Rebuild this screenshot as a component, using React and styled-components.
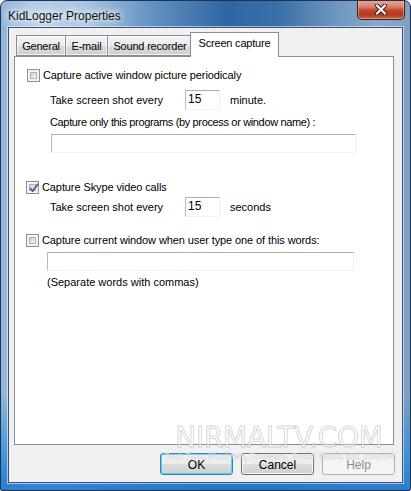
import React from "react";
import styled, { createGlobalStyle } from "styled-components";

const Global = createGlobalStyle`
  html, body { margin: 0; padding: 0; background: #fff; }
  body { width: 411px; height: 491px; overflow: hidden; }
  * { box-sizing: border-box; }
`;

const Window = styled.div`
  position: relative;
  width: 411px;
  height: 491px;
  border: 1px solid #20344e;
  border-radius: 7px 7px 2px 2px;
  background:
    linear-gradient(180deg, rgba(255,255,255,0) 0%, rgba(255,255,255,0) 80%, rgba(40,140,220,0.75) 93%, rgba(30,120,205,0.9) 100%),
    linear-gradient(90deg, #8fb5da 0%, #b4cfe8 8%, #a9c6e3 20%, #5f8fc0 38%, #2f66a2 55%, #3a70a8 68%, #6f96bf 82%, #8aa9ca 92%, #7e9fc4 100%);
  display: flex;
  flex-direction: column;
  font-family: "Liberation Sans", Arial, sans-serif;
  overflow: hidden;
`;

const TitleBar = styled.div`
  height: 28px;
  display: flex;
  align-items: flex-start;
  padding-left: 7px;
`;

const Title = styled.div`
  font-family: "Liberation Sans", Arial, sans-serif;
  font-size: 12px;
  color: #111;
  margin-top: 8px;
  text-shadow: 0 0 6px #fff, 0 0 10px #fff, 0 0 14px rgba(255,255,255,0.9);
`;

const CloseButton = styled.div`
  margin-left: auto;
  margin-right: 5px;
  width: 48px;
  height: 20px;
  margin-top: -1px;
  border: 1px solid #4a1a12;
  border-top: none;
  border-radius: 0 0 5px 5px;
  background: linear-gradient(180deg, #e9a99a 0%, #d9826e 35%, #c2432a 55%, #b33a22 80%, #cf6a4c 100%);
  box-shadow: inset 0 0 0 1px rgba(255,255,255,0.35);
  display: flex;
  align-items: center;
  justify-content: center;
`;

const Client = styled.div`
  margin: 0 7px 7px 7px;
  flex: 1;
  background: #f0f0f0;
  border: 1px solid #3b5272;
  box-shadow: 0 0 0 1px rgba(255,255,255,0.55);
  display: flex;
  flex-direction: column;
  padding: 3px 7px 7px 5px;
`;

const TabStrip = styled.div`
  display: flex;
  align-items: flex-end;
  height: 25px;
  padding-left: 2px;
  position: relative;
  z-index: 1;
`;

const Tab = styled.div`
  width: ${(p) => p.$w}px;
  height: ${(p) => (p.$active ? "25px" : "21px")};
  margin-left: ${(p) => (p.$active ? "-2px" : "0")};
  margin-right: ${(p) => (p.$active ? "0" : "-1px")};
  margin-bottom: ${(p) => (p.$active ? "-1px" : "0")};
  border: 1px solid #898c95;
  border-bottom: ${(p) => (p.$active ? "none" : "1px solid #898c95")};
  background: ${(p) =>
    p.$active ? "#ffffff" : "linear-gradient(180deg, #f3f3f3 0%, #ebebeb 50%, #dddddd 51%, #cfcfcf 100%)"};
  box-shadow: ${(p) => (p.$active ? "none" : "inset 0 0 0 1px rgba(255,255,255,0.7)")};
  font-size: 11px;
  letter-spacing: -0.2px;
  white-space: nowrap;
  color: #000;
  display: flex;
  justify-content: center;
  align-items: ${(p) => (p.$active ? "flex-start" : "center")};
  padding-top: ${(p) => (p.$active ? "4px" : "0")};
  position: relative;
  z-index: ${(p) => (p.$active ? 2 : 1)};
`;

const Panel = styled.div`
  height: 389px;
  background: #fff;
  border: 1px solid #898c95;
  margin-right: 1px;
  display: flex;
  flex-direction: column;
  padding: 12px 12px 0 12px;
  font-size: 11px;
  color: #000;
`;

const CheckRow = styled.div`
  display: flex;
  align-items: center;
  height: 13px;
  margin-top: ${(p) => p.$mt || 0}px;
  margin-left: ${(p) => p.$ml || 0}px;
  gap: 3px;
`;

const Box = styled.div`
  width: 13px;
  height: 13px;
  border: 1px solid #8e8f8f;
  background: #f4f4f4;
  padding: 2px;
  flex-shrink: 0;
`;

const BoxInner = styled.div`
  width: 100%;
  height: 100%;
  border: 1px solid #b4b4b4;
  background: linear-gradient(135deg, #cbcbcb 0%, #e6e6e6 60%, #f3f3f3 100%);
  position: relative;
`;

const CheckMark = styled.svg`
  position: absolute;
  left: -2px;
  top: -3px;
`;

const Label = styled.span`
  white-space: nowrap;
  line-height: 13px;
  letter-spacing: -0.1px;
`;

const FieldRow = styled.div`
  display: flex;
  align-items: center;
  height: 20px;
  margin-top: ${(p) => p.$mt || 0}px;
  margin-left: 23px;
`;

const FieldLabel = styled.span`
  width: 135px;
  white-space: nowrap;
`;

const Edit = styled.div`
  width: ${(p) => p.$w}px;
  height: ${(p) => p.$h || 20}px;
  border-top: 1px solid #abadb3;
  border-left: 1px solid #b7b9be;
  border-right: 1px solid #f1f2f5;
  border-bottom: 1px solid #f1f3f6;
  margin-left: ${(p) => p.$ml || 0}px;
  margin-top: ${(p) => p.$mt || 0}px;
  padding: 1px 2px;
  font-size: 12px;
  line-height: 15px;
  background: #fff;
`;

const Unit = styled.span`
  margin-left: 10px;
`;

const TextLine = styled.div`
  margin-top: ${(p) => p.$mt || 0}px;
  margin-left: ${(p) => p.$ml || 0}px;
  height: 14px;
  line-height: 14px;
  white-space: nowrap;
  letter-spacing: ${(p) => p.$ls || 0}px;
`;

const ButtonRow = styled.div`
  display: flex;
  justify-content: flex-end;
  gap: 8px;
  margin-top: 8px;
`;

const Button = styled.div`
  width: 73px;
  height: 22px;
  border: 1px solid ${(p) => (p.$disabled ? "#adb2b5" : p.$default ? "#3c7fb1" : "#707070")};
  border-radius: 3px;
  background: ${(p) =>
    p.$disabled
      ? "#f4f4f4"
      : "linear-gradient(180deg, #f2f2f2 0%, #ebebeb 48%, #dddddd 52%, #cfcfcf 100%)"};
  box-shadow: ${(p) =>
    p.$default ? "inset 0 0 0 1px #48d8fb" : p.$disabled ? "none" : "inset 0 0 0 1px rgba(255,255,255,0.8)"};
  color: ${(p) => (p.$disabled ? "#8d8d8d" : "#000")};
  font-size: 12px;
  padding-top: 2px;
  display: flex;
  align-items: center;
  justify-content: center;
`;

const Watermark = styled.div`
  position: absolute;
  left: 168px;
  top: 422px;
  width: 220px;
  pointer-events: none;
  display: flex;
  flex-direction: column;
  align-items: center;
`;

const WatermarkBig = styled.div`
  font-family: "DejaVu Sans", sans-serif;
  font-size: 28px;
  letter-spacing: -0.3px;
  color: rgba(255, 255, 255, 0.5);
  -webkit-text-stroke: 1px rgba(175, 175, 175, 0.5);
  line-height: 29px;
`;

const WatermarkSmall = styled.div`
  font-family: "Liberation Sans", Arial, sans-serif;
  font-weight: bold;
  font-size: 8.5px;
  line-height: 9px;
  color: rgba(255, 255, 255, 0.6);
  -webkit-text-stroke: 0.4px rgba(165, 165, 165, 0.5);
  margin-top: 0;
  white-space: nowrap;
`;

function Checkbox({ checked }) {
  return (
    <Box>
      <BoxInner>
        {checked && (
          <CheckMark width="12" height="12" viewBox="0 0 12 12">
            <path d="M2 6.2 L4.6 9 L10 2" fill="none" stroke="#4a5f97" strokeWidth="1.8" />
          </CheckMark>
        )}
      </BoxInner>
    </Box>
  );
}

export default function App() {
  return (
    <>
      <Global />
      <Window>
        <TitleBar>
          <Title>KidLogger Properties</Title>
          <CloseButton>
            <svg width="14" height="11" viewBox="0 0 14 11">
              <path d="M3 1.5 L11 9.5 M11 1.5 L3 9.5" stroke="#3a1c16" strokeWidth="4" strokeLinecap="round" />
              <path d="M3 1.5 L11 9.5 M11 1.5 L3 9.5" stroke="#ffffff" strokeWidth="2.2" strokeLinecap="round" />
            </svg>
          </CloseButton>
        </TitleBar>
        <Client>
          <TabStrip>
            <Tab $w={50}>General</Tab>
            <Tab $w={43}>E-mail</Tab>
            <Tab $w={86}>Sound recorder</Tab>
            <Tab $w={89} $active>Screen capture</Tab>
          </TabStrip>
          <Panel>
            <CheckRow>
              <Checkbox />
              <Label>Capture active window picture periodicaly</Label>
            </CheckRow>
            <FieldRow $mt={8}>
              <FieldLabel>Take screen shot every</FieldLabel>
              <Edit $w={35}>15</Edit>
              <Unit>minute.</Unit>
            </FieldRow>
            <TextLine $mt={5} $ml={23} $ls={-0.35}>
              Capture only this programs (by process or window name) :
            </TextLine>
            <Edit $w={305} $h={19} $ml={24} $mt={5} />
            <CheckRow $mt={28} $ml={-1}>
              <Checkbox checked />
              <Label>Capture Skype video calls</Label>
            </CheckRow>
            <FieldRow $mt={3}>
              <FieldLabel>Take screen shot every</FieldLabel>
              <Edit $w={35}>15</Edit>
              <Unit>seconds</Unit>
            </FieldRow>
            <CheckRow $mt={17} $ml={-1}>
              <Checkbox />
              <Label>Capture current window when user type one of this words:</Label>
            </CheckRow>
            <Edit $w={307} $h={19} $ml={20} $mt={5} />
            <TextLine $mt={4} $ml={20}>
              (Separate words with commas)
            </TextLine>
          </Panel>
          <ButtonRow>
            <Button $default>OK</Button>
            <Button>Cancel</Button>
            <Button $disabled>Help</Button>
          </ButtonRow>
        </Client>
        <Watermark>
          <WatermarkBig>NIRMALTV.COM</WatermarkBig>
          <WatermarkSmall>Tech Tips, Windows, Freeware, Social Media and Internet</WatermarkSmall>
        </Watermark>
      </Window>
    </>
  );
}
